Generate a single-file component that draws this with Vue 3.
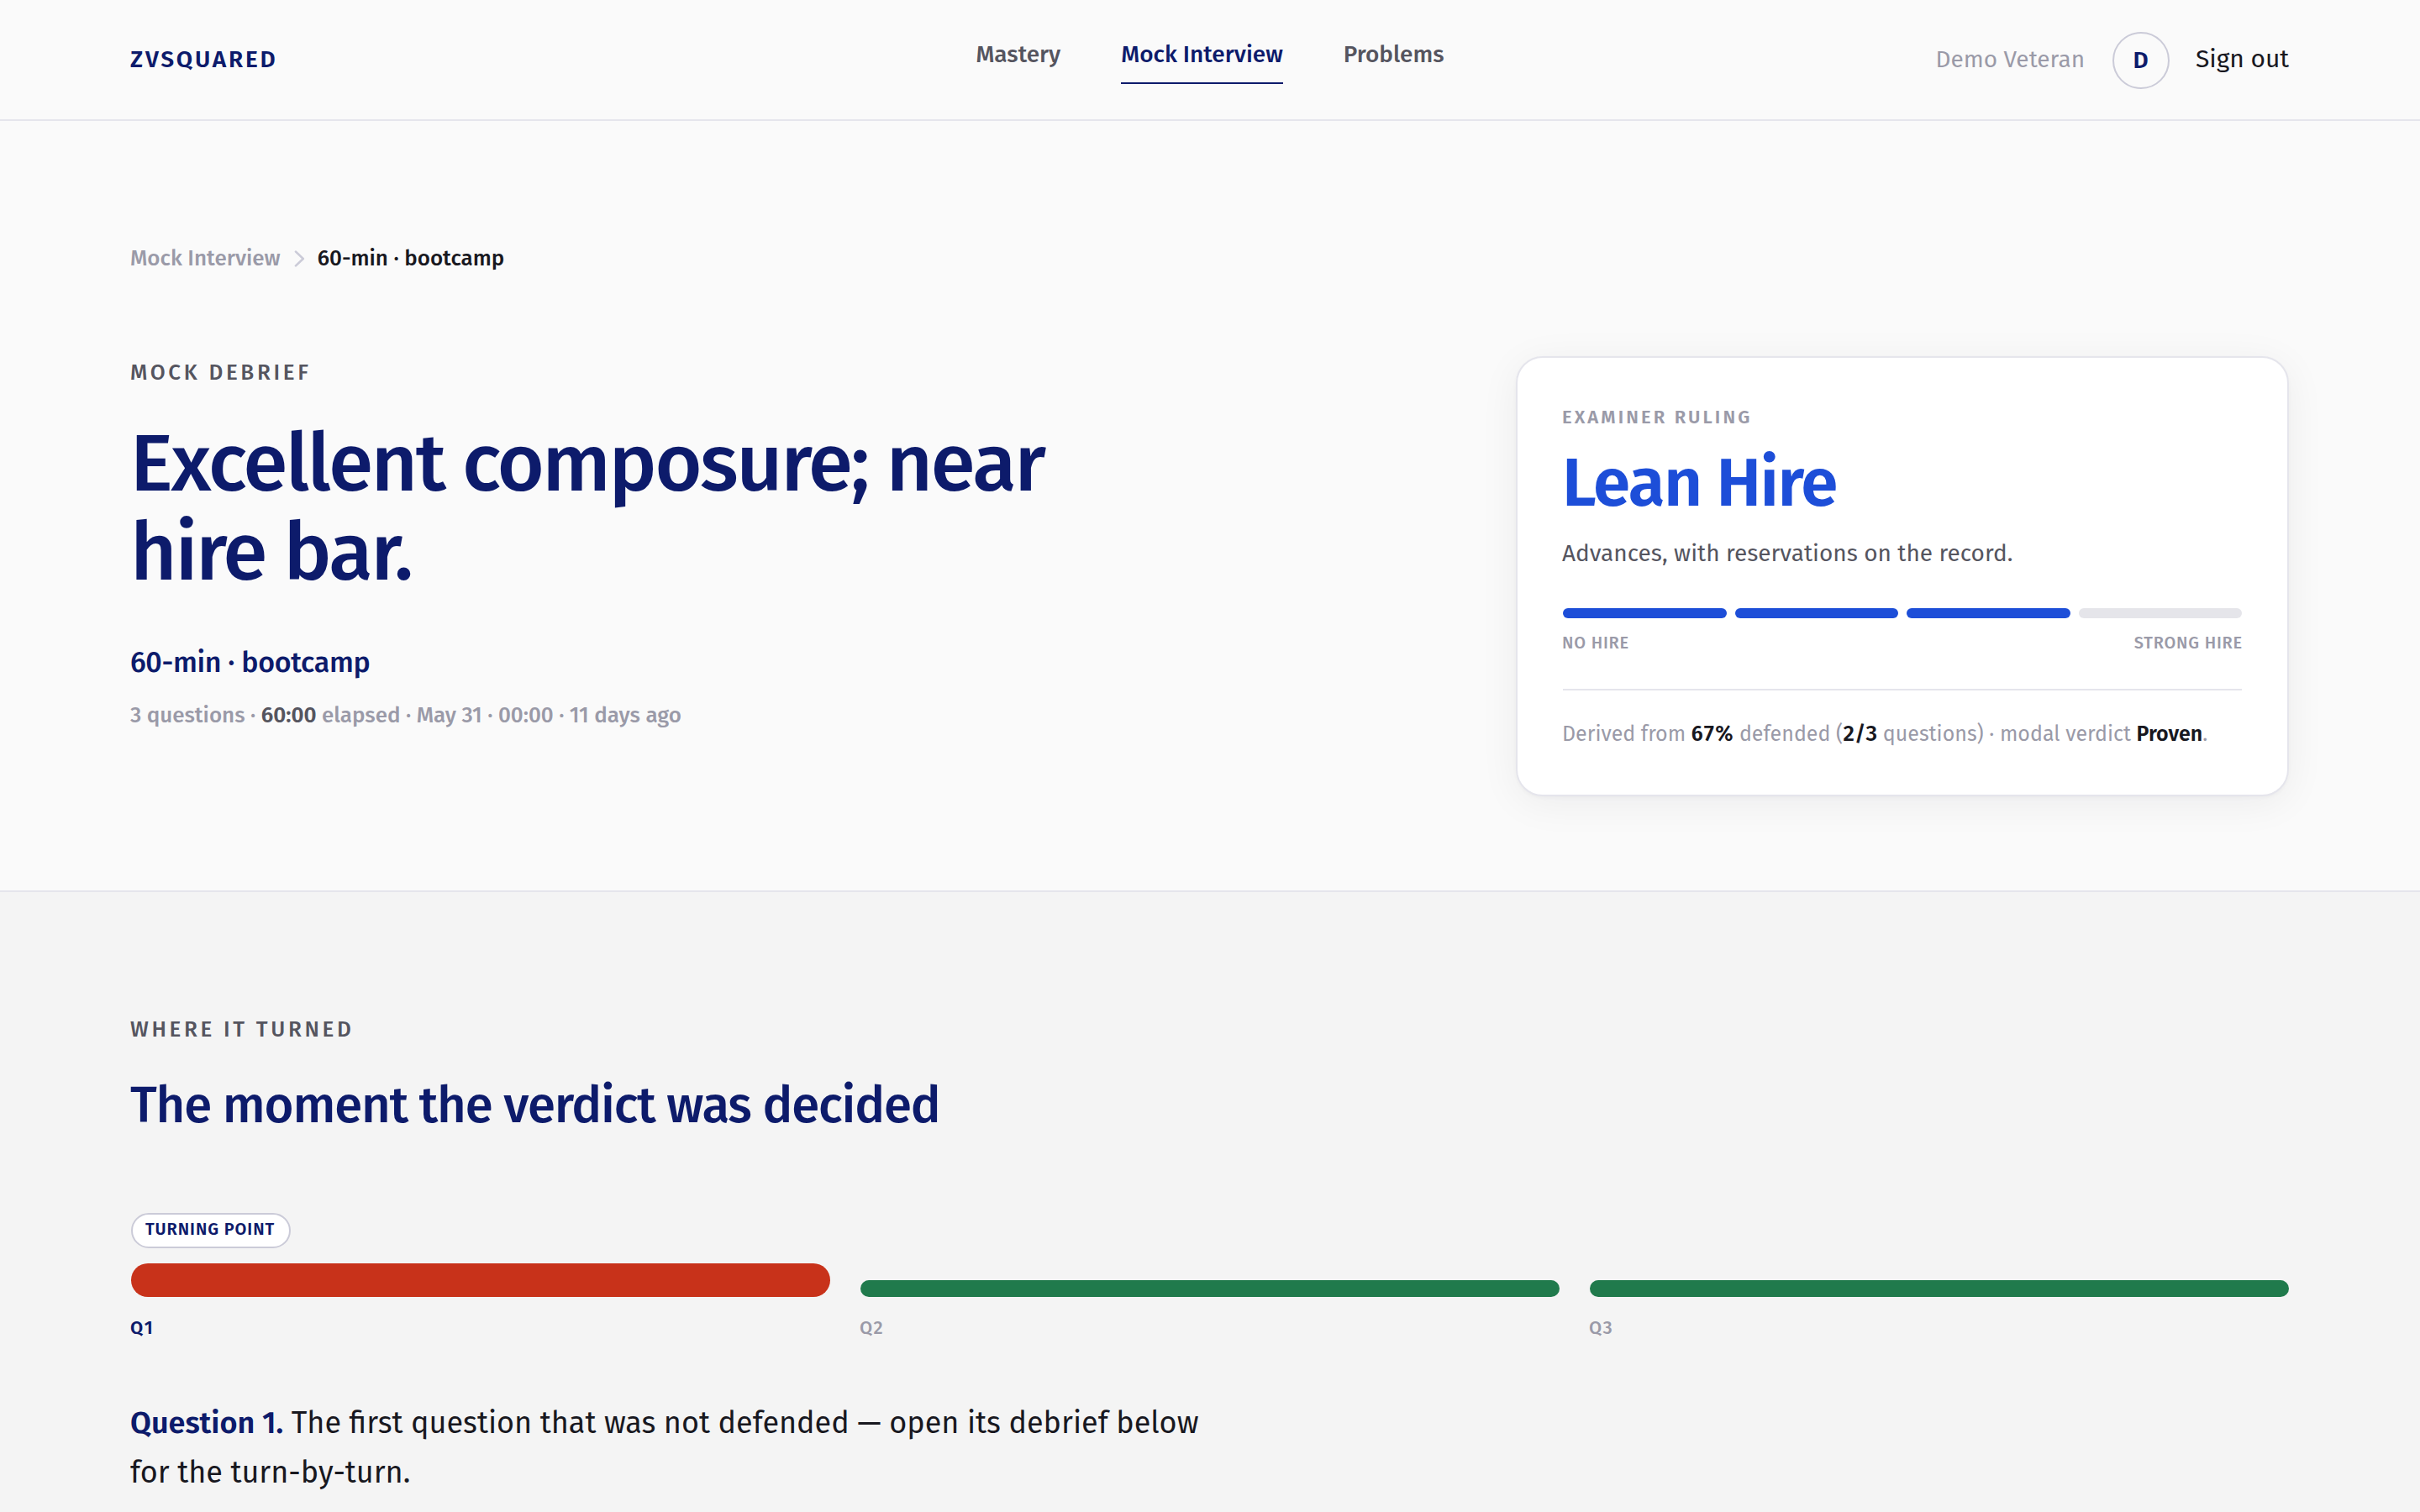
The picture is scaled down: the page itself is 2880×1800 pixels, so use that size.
<script setup>
const nav = [
  { label: 'Mastery' },
  { label: 'Mock Interview', active: true },
  { label: 'Problems' },
]

const scale = [true, true, true, false]

const questions = [
  { id: 'Q1', verdict: 'lost', turning: true },
  { id: 'Q2', verdict: 'proven' },
  { id: 'Q3', verdict: 'proven' },
]
</script>

<template>
  <div class="page">
    <header class="topbar">
      <div class="brand">ZVSQUARED</div>
      <nav class="nav">
        <a v-for="item in nav" :key="item.label" class="nav-link" :class="{ active: item.active }">{{ item.label }}</a>
      </nav>
      <div class="account">
        <span class="user">Demo Veteran</span>
        <span class="avatar">D</span>
        <a class="signout">Sign out</a>
      </div>
    </header>

    <section class="hero">
      <div class="crumbs">
        <span>Mock Interview</span>
        <svg class="chevron" width="14" height="20" viewBox="0 0 14 20" fill="none" stroke="#cbcbd8" stroke-width="2.6" stroke-linecap="round" stroke-linejoin="round">
          <path d="M2 1.6 10.8 10 2 18.4" />
        </svg>
        <span class="current">60-min · bootcamp</span>
      </div>

      <div class="hero-grid">
        <div class="intro">
          <div class="eyebrow">MOCK DEBRIEF</div>
          <h1>Excellent composure; near hire bar.</h1>
          <div class="session">60-min · bootcamp</div>
          <div class="meta">3 questions · <b>60:00</b> elapsed · May 31 · 00:00 · 11 days ago</div>
        </div>

        <aside class="card">
          <div class="card-label">EXAMINER RULING</div>
          <div class="ruling">Lean Hire</div>
          <div class="summary">Advances, with reservations on the record.</div>
          <div class="scale">
            <span v-for="(on, i) in scale" :key="i" :class="{ on }"></span>
          </div>
          <div class="ends"><span>NO HIRE</span><span>STRONG HIRE</span></div>
          <div class="derived">Derived from <b>67%</b> defended (<b>2/3</b> questions) · modal verdict <b>Proven</b>.</div>
        </aside>
      </div>
    </section>

    <section class="turn">
      <div class="eyebrow">WHERE IT TURNED</div>
      <h2>The moment the verdict was decided</h2>
      <div class="track">
        <div v-for="q in questions" :key="q.id" class="stop" :class="[q.verdict, { turning: q.turning }]">
          <span v-if="q.turning" class="pill">TURNING POINT</span>
          <span class="bar"></span>
          <span class="qid">{{ q.id }}</span>
        </div>
      </div>
      <p class="note"><b>Question 1.</b> The first question that was not defended — open its debrief below for the turn-by-turn.</p>
    </section>
  </div>
</template>

<style>
body {
  margin: 0;
  background: #f4f4f4;
}
</style>

<style scoped>
.page {
  width: 2880px;
  height: 1800px;
  overflow: hidden;
  background: #fafafa;
  color: #18181f;
  font-family: "Fira Sans", "Noto Sans", sans-serif;
}
.topbar {
  box-sizing: border-box;
  height: 144px;
  padding: 0 156px;
  border-bottom: 2px solid #e5e5ec;
  display: grid;
  grid-template-columns: 1fr auto 1fr;
  align-items: center;
}
.brand {
  margin-left: -1px;
  font-size: 28px;
  line-height: 34px;
  font-weight: 600;
  letter-spacing: 2.8px;
  color: #0d1b6b;
}
.nav {
  display: flex;
  gap: 72px;
}
.nav-link {
  font-size: 28px;
  line-height: 46px;
  padding-bottom: 10px;
  border-bottom: 2px solid transparent;
  font-weight: 500;
  color: #55555f;
}
.nav-link.active {
  color: #0d1b6b;
  border-color: #0d1b6b;
}
.account {
  display: flex;
  justify-content: flex-end;
  align-items: center;
}
.user {
  font-size: 28px;
  line-height: 34px;
  color: #9a9aa8;
}
.avatar {
  box-sizing: border-box;
  width: 68px;
  height: 68px;
  margin: 2px 31px 0 33px;
  border: 2px solid #cbcbd8;
  border-radius: 50%;
  display: flex;
  align-items: center;
  justify-content: center;
  padding: 0 1px 2px 0;
  font-size: 28px;
  font-weight: 600;
  color: #0d1b6b;
}
.signout {
  margin-bottom: 2px;
  font-size: 30px;
  line-height: 36px;
  letter-spacing: -0.1px;
}
.hero {
  box-sizing: border-box;
  height: 918px;
  padding: 144px 156px 0;
  border-bottom: 2px solid #e5e5ec;
}
.crumbs {
  display: flex;
  align-items: center;
  margin: 0 0 96px -1px;
  font-size: 26px;
  line-height: 40px;
  font-weight: 500;
  color: #9a9aa8;
}
.chevron {
  margin: 0 14px 0 16px;
}
.current {
  color: #18181f;
}
.hero-grid {
  display: flex;
  justify-content: space-between;
  align-items: flex-start;
}
.intro {
  width: 1200px;
  margin-left: -1px;
}
.eyebrow {
  font-size: 26px;
  line-height: 39px;
  font-weight: 500;
  letter-spacing: 3.64px;
  color: #55555f;
}
h1 {
  margin: 36px 0 53px;
  font-size: 96px;
  line-height: 105.6px;
  font-weight: 500;
  letter-spacing: -2.4px;
  color: #0d1b6b;
}
.session {
  font-size: 34px;
  line-height: 52px;
  font-weight: 500;
  letter-spacing: -0.34px;
  color: #0d1b6b;
}
.meta {
  margin-top: 17px;
  font-size: 26px;
  line-height: 40px;
  font-weight: 500;
  letter-spacing: -0.02px;
  color: #9a9aa8;
}
.meta b {
  font-weight: 600;
  color: #55555f;
}
.card {
  box-sizing: border-box;
  width: 920px;
  height: 524px;
  padding: 54px;
  background: #fff;
  border: 2px solid #e5e5ec;
  border-radius: 32px;
  box-shadow: 0 2px 4px rgba(16, 16, 40, 0.03), 0 8px 48px rgba(16, 16, 40, 0.06);
}
.card-label,
.ruling,
.summary {
  margin-left: -1px;
}
.card-label {
  font-size: 22px;
  line-height: 33px;
  font-weight: 600;
  letter-spacing: 3.08px;
  color: #9a9aa8;
}
.ruling {
  margin-top: 18px;
  font-size: 80px;
  line-height: 88px;
  font-weight: 600;
  letter-spacing: -1.6px;
  color: #1d4ed8;
}
.summary {
  margin-top: 18px;
  font-size: 28px;
  line-height: 44px;
  color: #55555f;
}
.scale {
  margin-top: 43px;
  display: grid;
  grid-template-columns: repeat(4, 1fr);
  gap: 10px;
}
.scale span {
  height: 12px;
  border-radius: 6px;
  background: #e5e5ea;
}
.scale .on {
  background: #1d4ed8;
}
.ends {
  margin: 13px -1px 0;
  display: flex;
  justify-content: space-between;
  font-size: 20px;
  line-height: 32px;
  font-weight: 500;
  letter-spacing: 0.8px;
  color: #9a9aa8;
}
.derived {
  margin-top: 39px;
  padding-top: 32px;
  border-top: 2px solid #e5e5ec;
  font-size: 25px;
  line-height: 40px;
  font-variant-numeric: tabular-nums;
  text-indent: -1px;
  white-space: nowrap;
  color: #9a9aa8;
}
.derived b {
  font-weight: 600;
  color: #18181f;
}
.turn {
  box-sizing: border-box;
  height: 738px;
  padding: 144px 156px 0;
  background: #f4f4f4;
}
.turn .eyebrow {
  margin-left: -1px;
}
h2 {
  margin: 35px 0 92px -1px;
  font-size: 60px;
  line-height: 72px;
  font-weight: 500;
  letter-spacing: -1.2px;
  color: #0d1b6b;
}
.track {
  display: grid;
  grid-template-columns: repeat(3, 1fr);
  gap: 36px;
}
.stop {
  display: flex;
  flex-direction: column;
  justify-content: flex-end;
  align-items: flex-start;
}
.pill {
  box-sizing: border-box;
  height: 42px;
  margin-bottom: 18px;
  padding: 0 17px 0 15px;
  border: 2px solid #cbcbd8;
  border-radius: 21px;
  background: #fff;
  font-size: 20px;
  line-height: 35px;
  font-weight: 600;
  letter-spacing: 0.93px;
  color: #0d1b6b;
}
.bar {
  width: 100%;
  height: 20px;
  border-radius: 10px;
}
.turning .bar {
  height: 40px;
  border-radius: 20px;
}
.lost .bar {
  background: #c8321a;
}
.proven .bar {
  background: #207a4c;
}
.qid {
  margin: 21px 0 0 -1px;
  font-size: 22px;
  line-height: 32px;
  font-weight: 500;
  letter-spacing: 1.8px;
  color: #9a9aa8;
}
.turning .qid {
  font-weight: 600;
  color: #0d1b6b;
}
.note {
  width: 1300px;
  margin: 68px 0 0 -1px;
  font-size: 36px;
  line-height: 58.5px;
}
.note b {
  font-weight: 600;
  color: #0d1b6b;
}
</style>
